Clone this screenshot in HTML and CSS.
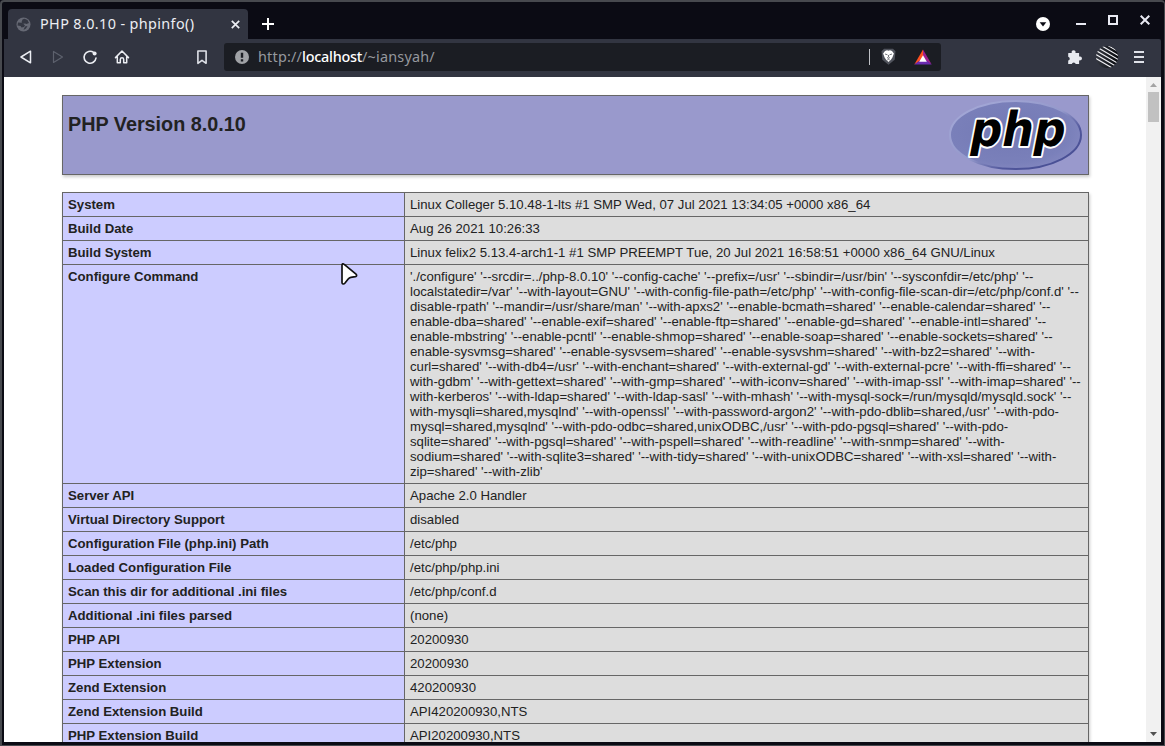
FILE: index.html
```html
<!DOCTYPE html>
<html lang="en">
<head>
<meta charset="utf-8">
<title>PHP 8.0.10 - phpinfo()</title>
<link rel="stylesheet" href="styles.css">
</head>
<body>
<div class="window">
  <header class="tabstrip">
    <div class="tab">
      <svg class="globe" width="15" height="15" viewBox="0 0 15 15"><circle cx="7.5" cy="7.5" r="7" fill="#666974"/><path d="M2 5.500l3.500.3 2 1.200 1.500 1.500-1 1.500-2.500.5-1-1.500-3-.5zM6.500 2.500l2-.8 3 1.300 1.500 3-2.500 1-1.500-.5-2 .300-1.500-1.500zM9 9.500l2.500-.5-1.500 2.500-2.500 1.500z" fill="#343742"/></svg>
      <span class="tab-title">PHP 8.0.10 - phpinfo()</span>
      <svg class="tab-close" width="9" height="9" viewBox="0 0 9 9"><path d="M.8.8l7.400 7.400M8.200.8L.8 8.200" stroke="#eceef3" stroke-width="1.700"/></svg>
    </div>
    <svg class="new-tab" width="12" height="12" viewBox="0 0 12 12"><path d="M6 0v12M0 6h12" stroke="#fff" stroke-width="2"/></svg>
    <div class="controls">
      <svg width="14" height="14" viewBox="0 0 14 14"><circle cx="7" cy="7" r="7" fill="#fff"/><path d="M3.700 5.200h6.600L7 9.500z" fill="#0b0b14"/></svg>
      <svg class="minimize" width="10" height="10" viewBox="0 0 10 10"><path d="M0 9h10" stroke="#e9eaf3" stroke-width="2"/></svg>
      <svg class="maximize" width="10" height="10" viewBox="0 0 10 10"><path d="M1 1h8v8H1z" fill="none" stroke="#e9eaf3" stroke-width="2"/></svg>
      <svg class="close" width="10" height="10" viewBox="0 0 10 10"><path d="M.7.7l8.600 8.600M9.300.7L.7 9.300" stroke="#e9eaf3" stroke-width="2"/></svg>
    </div>
  </header>
  <nav class="toolbar">
    <div class="nav-buttons">
      <svg width="16" height="16" viewBox="0 0 16 16"><path d="M12.500 2.200v11.600L3 8z" fill="none" stroke="#eceef3" stroke-width="1.500" stroke-linejoin="round"/></svg>
      <svg width="16" height="16" viewBox="0 0 16 16"><path d="M3.500 2.500v11L12.500 8z" fill="none" stroke="#5d616d" stroke-width="1.200" stroke-linejoin="round"/></svg>
      <svg width="16" height="16" viewBox="0 0 16 16"><path d="M11.600 3.400A6 6 0 1 0 14 9" fill="none" stroke="#eceef3" stroke-width="1.600" stroke-linecap="round"/><circle cx="12.600" cy="4.400" r="2" fill="#eceef3"/></svg>
      <svg width="16" height="16" viewBox="0 0 16 16"><path d="M1.500 8.600L8 2l6.500 6.600M3.300 7.500v6.300h3V10.500a1.700 1.700 0 0 1 3.400 0v3.300h3V7.500" fill="none" stroke="#eceef3" stroke-width="1.500" stroke-linejoin="round" stroke-linecap="round"/></svg>
    </div>
    <svg class="bookmark" width="10" height="15" viewBox="0 0 10 15"><path d="M.9 1h8.200v12.300L5 10.300.9 13.300z" fill="none" stroke="#dfe1e8" stroke-width="1.600" stroke-linejoin="round"/></svg>
    <div class="address">
      <svg class="site-info" width="14" height="14" viewBox="0 0 14 14"><circle cx="7" cy="7" r="7" fill="#a0a2a6"/><path d="M5.800 2.700h2.400v5H5.800zM5.800 9.200h2.400v2.200H5.800z" fill="#1b1d23"/></svg>
      <span class="url">http://<b>localhost</b>/~iansyah/</span>
      <span class="divider"></span>
      <svg class="shield" width="15" height="18" viewBox="0 0 15 18"><path d="M3 .8h9l2.500 2.500-.8 8.500-6.200 5-6.200-5L.5 3.300z" fill="#50535c"/><path d="M4 3l2-.7 1.500.5 1.500-.5 2 .7 1.900 2.500-1.500 4-1.500 2.300L7.500 14 5.100 11.800 3.600 9.500 2.100 5.500z" fill="#fff"/><path d="M4 6l2.500.8M11 6l-2.500.8M7.500 7v2.200M6 9.500l1.500.8 1.500-.8M6.300 12l1.200-.7 1.200.7" fill="none" stroke="#50535c" stroke-width=".8"/></svg>
      <svg class="bat" width="18" height="16" viewBox="0 0 18 16"><path d="M9 .5L.3 15.500 9 10z" fill="#ff4f1f"/><path d="M9 .5l8.700 15L9 10z" fill="#9e1f8d"/><path d="M.3 15.500h17.400L9 9z" fill="#6b2bb0"/><path d="M9 6.300l3.800 6.400H5.200z" fill="#fff"/></svg>
    </div>
    <div class="extensions">
      <svg class="puzzle" width="15" height="15" viewBox="0 0 15 15"><path d="M1.500 3h3.300a2 2 0 1 1 3.600 0h3.700v3.600a2 2 0 1 1 0 3.600v3.800H8.700a2 2 0 0 0-3.900 0H1.200v-3.400a2 2 0 0 0 0-3.900V3.500z" fill="#e8eaf0"/></svg>
      <svg class="avatar" width="22" height="22" viewBox="0 0 22 22"><defs><clipPath id="disc"><circle cx="11" cy="11" r="11"/></clipPath><linearGradient id="shade"><stop offset="0" stop-color="#343740"/><stop offset="1" stop-color="#07090d"/></linearGradient></defs><g clip-path="url(#disc)"><path d="M0 0h22v22H0z" fill="url(#shade)"/><path d="M0-7.500l24 14M0-3.500l24 14M0 .5l24 14M0 4.500l24 14M0 8.500l24 14M0 12.500l24 14" stroke="#ececf0" stroke-width="1.200"/></g></svg>
      <svg class="menu" width="10" height="12" viewBox="0 0 10 12"><path d="M0 1h10M0 6h10M0 11h10" stroke="#dfe1e8" stroke-width="1.800"/></svg>
    </div>
  </nav>
  <div class="viewport">
    <main class="page">
      <section class="banner">
        <h1>PHP Version 8.0.10</h1>
        <svg class="logo" width="134" height="72" viewBox="0 0 134 72">
          <defs>
            <radialGradient id="oval" cx=".45" cy=".45" r=".62"><stop offset="0" stop-color="#7379b4"/><stop offset=".75" stop-color="#7a80ba"/><stop offset="1" stop-color="#8589c1"/></radialGradient>
            <linearGradient id="rim" x1="0" y1="0" x2="1" y2="1"><stop offset="0" stop-color="#a7abd9"/><stop offset=".5" stop-color="#9499cb"/><stop offset=".7" stop-color="#50569b"/><stop offset="1" stop-color="#444b90"/></linearGradient>
          </defs>
          <ellipse cx="66.500" cy="36" rx="65.500" ry="34" fill="url(#oval)" stroke="url(#rim)" stroke-width="2"/>
          <text class="logo-text" transform="translate(19 46.500) skewX(-11)" x="0" y="0" textLength="95" lengthAdjust="spacingAndGlyphs">php</text>
        </svg>
      </section>
      <table class="info">
        <tr><th>System</th><td>Linux Colleger 5.10.48-1-lts #1 SMP Wed, 07 Jul 2021 13:34:05 +0000 x86_64</td></tr>
        <tr><th>Build Date</th><td>Aug 26 2021 10:26:33</td></tr>
        <tr><th>Build System</th><td>Linux felix2 5.13.4-arch1-1 #1 SMP PREEMPT Tue, 20 Jul 2021 16:58:51 +0000 x86_64 GNU/Linux</td></tr>
        <tr><th>Configure Command</th><td>'./configure' '--srcdir=../php-8.0.10' '--config-cache' '--prefix=/usr' '--sbindir=/usr/bin' '--sysconfdir=/etc/php' '--<br>localstatedir=/var' '--with-layout=GNU' '--with-config-file-path=/etc/php' '--with-config-file-scan-dir=/etc/php/conf.d' '--<br>disable-rpath' '--mandir=/usr/share/man' '--with-apxs2' '--enable-bcmath=shared' '--enable-calendar=shared' '--<br>enable-dba=shared' '--enable-exif=shared' '--enable-ftp=shared' '--enable-gd=shared' '--enable-intl=shared' '--<br>enable-mbstring' '--enable-pcntl' '--enable-shmop=shared' '--enable-soap=shared' '--enable-sockets=shared' '--<br>enable-sysvmsg=shared' '--enable-sysvsem=shared' '--enable-sysvshm=shared' '--with-bz2=shared' '--with-<br>curl=shared' '--with-db4=/usr' '--with-enchant=shared' '--with-external-gd' '--with-external-pcre' '--with-ffi=shared' '--<br>with-gdbm' '--with-gettext=shared' '--with-gmp=shared' '--with-iconv=shared' '--with-imap-ssl' '--with-imap=shared' '--<br>with-kerberos' '--with-ldap=shared' '--with-ldap-sasl' '--with-mhash' '--with-mysql-sock=/run/mysqld/mysqld.sock' '--<br>with-mysqli=shared,mysqlnd' '--with-openssl' '--with-password-argon2' '--with-pdo-dblib=shared,/usr' '--with-pdo-<br>mysql=shared,mysqlnd' '--with-pdo-odbc=shared,unixODBC,/usr' '--with-pdo-pgsql=shared' '--with-pdo-<br>sqlite=shared' '--with-pgsql=shared' '--with-pspell=shared' '--with-readline' '--with-snmp=shared' '--with-<br>sodium=shared' '--with-sqlite3=shared' '--with-tidy=shared' '--with-unixODBC=shared' '--with-xsl=shared' '--with-<br>zip=shared' '--with-zlib'</td></tr>
        <tr><th>Server API</th><td>Apache 2.0 Handler</td></tr>
        <tr><th>Virtual Directory Support</th><td>disabled</td></tr>
        <tr><th>Configuration File (php.ini) Path</th><td>/etc/php</td></tr>
        <tr><th>Loaded Configuration File</th><td>/etc/php/php.ini</td></tr>
        <tr><th>Scan this dir for additional .ini files</th><td>/etc/php/conf.d</td></tr>
        <tr><th>Additional .ini files parsed</th><td>(none)</td></tr>
        <tr><th>PHP API</th><td>20200930</td></tr>
        <tr><th>PHP Extension</th><td>20200930</td></tr>
        <tr><th>Zend Extension</th><td>420200930</td></tr>
        <tr><th>Zend Extension Build</th><td>API420200930,NTS</td></tr>
        <tr><th>PHP Extension Build</th><td>API20200930,NTS</td></tr>
      </table>
    </main>
    <aside class="scrollbar">
      <svg width="7" height="4" viewBox="0 0 7 4"><path d="M0 4h7L3.500 0z" fill="#a3a3a3"/></svg>
      <div class="thumb"></div>
      <svg class="down" width="7" height="4" viewBox="0 0 7 4"><path d="M0 0h7L3.500 4z" fill="#505050"/></svg>
    </aside>
  </div>
</div>
<svg class="cursor" width="20" height="26" viewBox="0 0 20 26"><path d="M3 3.200c0-1.500 1.200-1.800 2.200-.9L17 12.200c1.100 1 .7 2.200-.7 2.500l-4.500.7c-1.200.2-1.900.7-2.600 1.600l-3.400 4.300c-1.100 1.200-2.800.8-2.800-.8z" fill="#fff" stroke="#111" stroke-width="1.700"/></svg>
</body>
</html>
```
FILE: styles.css
```css
* { box-sizing: border-box; }
body { margin: 0; background: #0b0b14; overflow: hidden; }
svg { display: block; flex: none; }
.window {
  width: 1165px; height: 746px; display: flex; flex-direction: column;
  background: #0b0b14; border: solid #47494e; border-width: 2px 1px 1px 2px;
  border-radius: 4px 4px 0 0; padding: 0 3px 3px 2px;
  font-family: "Noto Sans", sans-serif;
}
.tabstrip { height: 37px; display: flex; align-items: flex-start; padding: 7px 0 0 4px; flex: none; }
.tab {
  width: 240px; height: 30px; display: flex; align-items: center; padding: 0 8px;
  background: #323541; border-radius: 4px 4px 0 0;
}
.tab-title { margin-left: 9px; font-size: 14.4px; line-height: 20px; letter-spacing: .38px; color: #eceef3; white-space: nowrap; }
.tab-close { margin-left: auto; }
.new-tab { margin: 9px 0 0 14px; }
.controls { margin: 8px 11px 0 auto; display: flex; }
.minimize { margin: -2px 0 0 26px; }
.maximize { margin: -2px 0 0 22px; }
.close { margin: -2px 0 0 22px; }
.toolbar { height: 38px; display: flex; align-items: center; padding: 0 17px 2px 14px; background: #323541; border-top-right-radius: 2px; flex: none; }
.nav-buttons { display: flex; gap: 16px; }
.bookmark { margin-left: 67px; }
.address { width: 717px; height: 28px; margin-left: 17px; padding: 0 9px 0 11px; display: flex; align-items: center; background: #1b1d23; border-radius: 3px; }
.url { margin-left: 9px; font-size: 14.4px; line-height: 20px; letter-spacing: .2px; color: #96989e; white-space: nowrap; }
.url b { font-weight: 500; letter-spacing: -.25px; color: #fff; }
.divider { width: 1px; height: 16px; margin: 0 -1px 0 auto; background: #bfc1c6; }
.shield { margin-left: 12px; }
.bat { margin-left: 18px; }
.extensions { margin-left: auto; display: flex; align-items: center; }
.avatar { margin-left: 14px; }
.menu { margin-left: 16px; }
.viewport { flex: 1; min-height: 0; display: flex; overflow: hidden; background: #fff; font-family: "Liberation Sans", Arial, sans-serif; color: #222; }
.page { padding: 18px 0 0 58px; flex: 1; }
.banner {
  width: 1027px; height: 80px; display: flex; justify-content: space-between; padding: 3px 5px;
  background: #9999cc; border: 1px solid #666; box-shadow: 1px 2px 3px #ccc;
}
h1 { margin: 13px 0 0; font-size: 19.8px; line-height: 24px; font-weight: bold; }
.logo-text { font: bold 48px "DejaVu Sans", sans-serif; fill: #000; stroke: #fff; stroke-width: 4px; paint-order: stroke; stroke-linejoin: round; }
.info { width: 1027px; margin-top: 17px; border-collapse: collapse; table-layout: fixed; box-shadow: 1px 2px 3px #ccc; font-size: 13.2px; line-height: 15px; }
.info th, .info td { border: 1px solid #666; padding: 4px 5px; text-align: left; vertical-align: top; white-space: nowrap; }
.info th { width: 342px; background: #ccccff; }
.info td { background: #ddd; }
.scrollbar { width: 15px; background: #f1f1f1; display: flex; flex-direction: column; align-items: center; padding: 6px 0; flex: none; }
.thumb { width: 11px; height: 30px; margin-top: 5px; background: #c1c1c1; }
.down { margin-top: auto; }
.cursor { position: absolute; left: 339px; top: 262px; }
```
